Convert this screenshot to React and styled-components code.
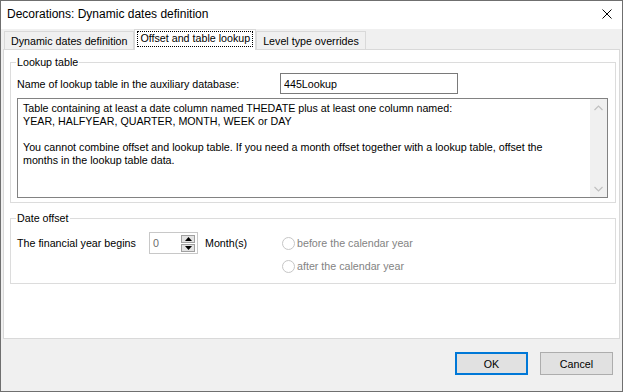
import React from 'react';
import styled, { createGlobalStyle } from 'styled-components';

const GlobalStyle = createGlobalStyle`
  html, body {
    margin: 0;
    padding: 0;
    background: #ffffff;
  }
  body {
    font-family: "Liberation Sans", Arial, sans-serif;
    font-size: 10.7px;
    color: #000;
  }
  * {
    box-sizing: border-box;
  }
`;

const App = () => {
  return (
    <>
      <GlobalStyle />
      <Window>
        <TitleBar>
          <Title>Decorations: Dynamic dates definition</Title>
          <CloseIcon width="10" height="10" viewBox="0 0 10 10">
            <path d="M0.5 0.5 L9.5 9.5 M9.5 0.5 L0.5 9.5" stroke="#000" strokeWidth="1" />
          </CloseIcon>
        </TitleBar>

        <Body>
          <TabRow>
            <Tab>Dynamic dates definition</Tab>
            <Tab $active>
              <FocusText>Offset and table lookup</FocusText>
            </Tab>
            <Tab>Level type overrides</Tab>
          </TabRow>

          <Panel>
            <Group>
              <Caption>Lookup table</Caption>
              <LookupRow>
                <RowLabel>Name of lookup table in the auxiliary database:</RowLabel>
                <TextInput defaultValue="445Lookup" />
              </LookupRow>
              <Memo>
                <MemoText>
                  <MemoLine>Table containing at least a date column named THEDATE plus at least one column named:</MemoLine>
                  <MemoLine>YEAR, HALFYEAR, QUARTER, MONTH, WEEK or DAY</MemoLine>
                  <MemoLine>&nbsp;</MemoLine>
                  <MemoLine>You cannot combine offset and lookup table. If you need a month offset together with a lookup table, offset the</MemoLine>
                  <MemoLine>months in the lookup table data.</MemoLine>
                </MemoText>
                <ScrollBar>
                  <ScrollArrow>
                    <svg width="9" height="6" viewBox="0 0 9 6">
                      <path d="M0.5 5 L4.5 1 L8.5 5" stroke="#c0c0c0" strokeWidth="1.2" fill="none" />
                    </svg>
                  </ScrollArrow>
                  <ScrollArrow>
                    <svg width="9" height="6" viewBox="0 0 9 6">
                      <path d="M0.5 1 L4.5 5 L8.5 1" stroke="#c0c0c0" strokeWidth="1.2" fill="none" />
                    </svg>
                  </ScrollArrow>
                </ScrollBar>
              </Memo>
            </Group>

            <Group $spaced>
              <Caption>Date offset</Caption>
              <OffsetRow>
                <OffsetControls>
                  <FieldLabel>The financial year begins</FieldLabel>
                  <Spin>
                    <SpinValue>0</SpinValue>
                    <SpinButtons>
                      <SpinButton>
                        <svg width="7" height="4" viewBox="0 0 7 4">
                          <path d="M0 4 L3.5 0 L7 4 Z" fill="#000" />
                        </svg>
                      </SpinButton>
                      <SpinButton>
                        <svg width="7" height="4" viewBox="0 0 7 4">
                          <path d="M0 0 L3.5 4 L7 0 Z" fill="#000" />
                        </svg>
                      </SpinButton>
                    </SpinButtons>
                  </Spin>
                  <UnitLabel>Month(s)</UnitLabel>
                </OffsetControls>
                <RadioGroup>
                  <RadioRow>
                    <RadioDot />
                    <RadioText>before the calendar year</RadioText>
                  </RadioRow>
                  <RadioRow>
                    <RadioDot />
                    <RadioText>after the calendar year</RadioText>
                  </RadioRow>
                </RadioGroup>
              </OffsetRow>
            </Group>
          </Panel>

          <Footer>
            <DialogButton $primary>OK</DialogButton>
            <DialogButton>Cancel</DialogButton>
          </Footer>
        </Body>
      </Window>
    </>
  );
};

const Window = styled.div`
  width: 623px;
  height: 392px;
  border: 1px solid #6f6f6f;
  display: flex;
  flex-direction: column;
  background: #f0f0f0;
`;

const TitleBar = styled.div`
  height: 28px;
  background: #ffffff;
  display: flex;
  align-items: center;
  justify-content: space-between;
  padding: 0 10px 2px 6px;
`;

const Title = styled.div`
  font-size: 12px;
  color: #000;
`;

const CloseIcon = styled.svg`
  display: block;
`;

const Body = styled.div`
  flex: 1;
  display: flex;
  flex-direction: column;
  padding: 0 2px;
`;

const TabRow = styled.div`
  display: flex;
  align-items: flex-end;
  height: 20px;
  padding-left: 1px;
`;

const Tab = styled.div`
  position: relative;
  z-index: ${p => (p.$active ? 1 : 0)};
  height: ${p => (p.$active ? '21px' : '18px')};
  margin-bottom: ${p => (p.$active ? '-1px' : '0')};
  padding: ${p => (p.$active ? '0 2px 2px' : '0 6px')};
  display: flex;
  align-items: center;
  background: ${p => (p.$active ? '#ffffff' : '#f0f0f0')};
  border: 1px solid #d9d9d9;
  border-bottom: none;
  white-space: nowrap;
`;

const FocusText = styled.span`
  display: block;
  padding: 1px 3px 2px;
  line-height: 13px;
  outline: 1px dotted #000;
  outline-offset: -1px;
`;

const Panel = styled.div`
  height: 290px;
  background: #ffffff;
  border: 1px solid #d9d9d9;
  padding: 6px 3px 0 6px;
  display: flex;
  flex-direction: column;
`;

const Group = styled.fieldset`
  margin: ${p => (p.$spaced ? '9px 0 0' : '0')};
  border: 1px solid #dcdcdc;
  padding: 0 7px 4px 6px;
  min-width: 0;
`;

const Caption = styled.legend`
  padding: 0 1px;
  margin-left: -1px;
  line-height: 13px;
  font-size: 10.7px;
`;

const LookupRow = styled.div`
  display: flex;
  align-items: center;
  margin-top: 4px;
`;

const RowLabel = styled.div`
  width: 263px;
  flex-shrink: 0;
`;

const TextInput = styled.input`
  width: 178px;
  height: 21px;
  border: 1px solid #7a7a7a;
  padding: 0 3px;
  font-family: inherit;
  font-size: 10.7px;
  color: #000;
  outline: none;
`;

const Memo = styled.div`
  margin-top: 4px;
  height: 100px;
  border: 1px solid #828282;
  display: flex;
`;

const MemoText = styled.div`
  flex: 1;
  padding: 3px 5px;
  line-height: 13px;
  overflow: hidden;
`;

const MemoLine = styled.div`
  white-space: nowrap;
`;

const ScrollBar = styled.div`
  width: 17px;
  background: #f0f0f0;
  display: flex;
  flex-direction: column;
  justify-content: space-between;
`;

const ScrollArrow = styled.div`
  height: 17px;
  display: flex;
  align-items: center;
  justify-content: center;

  svg {
    display: block;
  }
`;

const OffsetRow = styled.div`
  display: flex;
  align-items: flex-start;
  margin-top: 7px;
  margin-bottom: 2px;
`;

const OffsetControls = styled.div`
  display: flex;
  align-items: center;
  height: 22px;
`;

const FieldLabel = styled.div`
  width: 132px;
`;

const Spin = styled.div`
  width: 49px;
  height: 22px;
  border: 1px solid #c8c8c8;
  display: flex;
  align-items: center;
`;

const SpinValue = styled.div`
  flex: 1;
  padding-left: 3px;
  color: #6d6d6d;
`;

const SpinButtons = styled.div`
  display: flex;
  flex-direction: column;
  gap: 1px;
  padding-right: 2px;
`;

const SpinButton = styled.div`
  width: 14px;
  height: 8px;
  border: 1px solid #a0a0a0;
  background: #e3e3e3;
  display: flex;
  align-items: center;
  justify-content: center;

  svg {
    display: block;
  }
`;

const UnitLabel = styled.div`
  width: 77px;
  margin-left: 7px;
`;

const RadioGroup = styled.div`
  display: flex;
  flex-direction: column;
  gap: 1px;
`;

const RadioRow = styled.div`
  display: flex;
  align-items: center;
  height: 22px;
`;

const RadioDot = styled.span`
  width: 13px;
  height: 13px;
  border-radius: 50%;
  border: 1px solid #c6c6c6;
  background: #ffffff;
  margin-right: 2px;
`;

const RadioText = styled.span`
  color: #838383;
`;

const Footer = styled.div`
  display: flex;
  justify-content: flex-end;
  gap: 12px;
  padding: 13px 7px 16px 0;
`;

const DialogButton = styled.button`
  width: 73px;
  height: 23px;
  background: #e1e1e1;
  border: ${p => (p.$primary ? '2px solid #0078d7' : '1px solid #adadad')};
  font-family: inherit;
  font-size: 10.7px;
  color: #000;
  padding: 0;
`;

export default App;
